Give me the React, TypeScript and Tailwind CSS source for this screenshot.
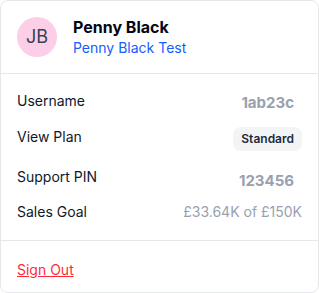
import React from 'react';

type Row = {
  label: string;
  value: React.ReactNode;
  rowClass: string;
  labelClass: string;
};

const rows: Row[] = [
  {
    label: 'Username',
    value: <span className="mt-[3px] mr-2 text-[15px] leading-5 font-bold text-gray-400">1ab23c</span>,
    rowClass: 'items-start h-[26px]',
    labelClass: 'mt-px',
  },
  {
    label: 'View Plan',
    value: (
      <span className="h-6 px-2 flex items-center rounded-lg bg-gray-100 text-xs font-semibold text-gray-800">
        Standard
      </span>
    ),
    rowClass: 'items-start mt-[11px] h-6',
    labelClass: '',
  },
  {
    label: 'Support PIN',
    value: <span className="mt-[5px] mr-2 text-[15px] leading-5 font-bold text-gray-400">123456</span>,
    rowClass: 'items-start mt-[15px] h-[26px]',
    labelClass: 'mt-px',
  },
  {
    label: 'Sales Goal',
    value: <span className="text-sm leading-5 text-gray-400">£33.64K of £150K</span>,
    rowClass: 'items-center mt-[10px]',
    labelClass: '',
  },
];

export default function App() {
  return (
    <div className="w-[319px] h-[293px] bg-white" style={{ fontFamily: 'Inter, "Noto Sans", sans-serif' }}>
      <div className="h-full flex flex-col rounded-lg border border-gray-200 overflow-hidden">
        {/* Header */}
        <div className="shrink-0 flex items-center gap-4 px-4 pt-4 pb-4 border-b border-gray-200">
          <div className="w-10 h-10 shrink-0 rounded-full bg-pink-200 flex items-center justify-center text-lg text-gray-700">
            JB
          </div>
          <div className="flex flex-col">
            <span className="text-base leading-5 font-bold text-gray-950">Penny Black</span>
            <span className="mt-0.5 text-sm leading-[18px] text-blue-600">Penny Black Test</span>
          </div>
        </div>

        {/* Details */}
        <div className="shrink-0 flex flex-col pt-4 px-4 h-[167px] border-b border-gray-200">
          {rows.map((row) => (
            <div key={row.label} className={`flex justify-between ${row.rowClass}`}>
              <span className={`text-sm leading-5 text-gray-900 ${row.labelClass}`}>{row.label}</span>
              {row.value}
            </div>
          ))}
        </div>

        {/* Footer */}
        <div className="px-4 pt-4">
          <a href="#" className="text-sm leading-5 text-red-500 underline">
            Sign Out
          </a>
        </div>
      </div>
    </div>
  );
}
